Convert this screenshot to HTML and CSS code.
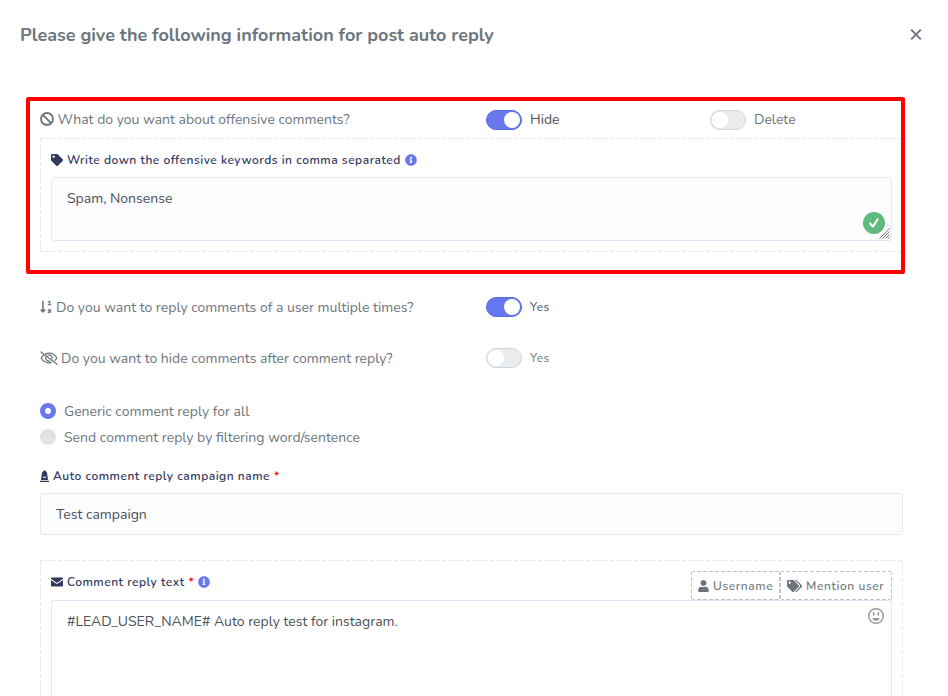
FILE: index.html
```
<!DOCTYPE html>
<html lang="en">
<head>
<meta charset="utf-8">
<title>Post auto reply</title>
<link rel="stylesheet" href="styles.css">
</head>
<body>
<svg class="defs" width="0" height="0" aria-hidden="true">
  <symbol id="info" viewBox="0 0 512 512"><path d="M256 8C119.043 8 8 119.083 8 256c0 136.997 111.043 248 248 248s248-111.003 248-248C504 119.083 392.957 8 256 8zm0 110c23.196 0 42 18.804 42 42s-18.804 42-42 42-42-18.804-42-42 18.804-42 42-42zm56 254c0 6.627-5.373 12-12 12h-88c-6.627 0-12-5.373-12-12v-24c0-6.627 5.373-12 12-12h12v-64h-12c-6.627 0-12-5.373-12-12v-24c0-6.627 5.373-12 12-12h64c6.627 0 12 5.373 12 12v100h12c6.627 0 12 5.373 12 12v24z"/></symbol>
</svg>
<header class="head">
  <h5 class="title">Please give the following information for post auto reply</h5>
  <svg class="close" width="12" height="12" viewBox="0 0 12 12"><path d="M1.2 .7l9.6 9.6M10.8 .7L1.2 10.3"/></svg>
</header>
<main class="body">
  <section class="offensive">
    <div class="row first">
      <div class="question">
        <svg class="ic" width="14" height="14" viewBox="0 0 14 14"><g fill="none" stroke="currentColor" stroke-width="1.8"><circle cx="7" cy="7" r="6"/><path d="M2.8 2.8l8.4 8.4"/></g></svg>
        <span>What do you want about offensive comments?</span>
      </div>
      <div class="choice"><span class="switch on"></span><span class="dark">Hide</span></div>
      <div class="choice"><span class="switch"></span><span>Delete</span></div>
    </div>
    <div class="panel dashed">
      <div class="label">
        <svg class="ic" width="12" height="12" viewBox="0 0 512 512"><path d="M0 252.118V48C0 21.49 21.49 0 48 0h204.118a48 48 0 0 1 33.941 14.059l211.882 211.882c18.745 18.745 18.745 49.137 0 67.882L293.823 497.941c-18.745 18.745-49.137 18.745-67.882 0L14.059 286.059A48 48 0 0 1 0 252.118zM112 64c-26.51 0-48 21.49-48 48s21.49 48 48 48 48-21.49 48-48-21.49-48-48-48z"/></svg>
        <span>Write down the offensive keywords in comma separated</span>
        <svg class="ic info" width="12" height="12"><use href="#info"/></svg>
      </div>
      <div class="field keywords">Spam, Nonsense
        <svg class="ok" width="22" height="22" viewBox="0 0 22 22"><circle cx="11" cy="11" r="11"/><path d="M7 11.3l2.9 3.3 4.7-7.2"/></svg>
        <svg class="grip" width="11" height="11" viewBox="0 0 11 11"><path d="M.5 10.5l10-10M3.5 10.5l7-7M6.5 10.5l4-4M9 10.5l1.5-1.5"/></svg>
      </div>
    </div>
    <div class="highlight"></div>
  </section>

  <div class="row multiple">
    <div class="question">
      <svg class="ic sort" width="13" height="14" viewBox="0 0 13 14"><path d="M2.9 .8v11M.7 9.6l2.2 2.2 2.2-2.2" fill="none" stroke="currentColor" stroke-width="1.6"/><text x="7.8" y="5.3">1</text><text x="7.8" y="12.5">9</text></svg>
      <span>Do you want to reply comments of a user multiple times?</span>
    </div>
    <div class="choice"><span class="switch on"></span><span class="small dark">Yes</span></div>
  </div>
  <div class="row hide">
    <div class="question">
      <svg class="ic eye" width="18" height="14" viewBox="0 0 18 14"><g fill="none" stroke="currentColor" stroke-width="1.3" stroke-linecap="round"><path d="M1 .9l16 12.3M5.6 2.9A8.6 8.6 0 0 1 9 2.2c3.4 0 6.3 1.9 7.8 4.8a9 9 0 0 1-1.8 2.4M3.3 4.4A9 9 0 0 0 1.2 7c1.5 2.9 4.4 4.8 7.8 4.8a8.6 8.6 0 0 0 2.3-.3M8 4a3.2 3.2 0 0 1 4.1 3.7M5.8 6.5a3.2 3.2 0 0 0 3.7 3.6"/></g></svg>
      <span>Do you want to hide comments after comment reply?</span>
    </div>
    <div class="choice"><span class="switch"></span><span class="small">Yes</span></div>
  </div>

  <div class="radios">
    <div class="radio"><span class="dot checked"></span><span>Generic comment reply for all</span></div>
    <div class="radio"><span class="dot"></span><span>Send comment reply by filtering word/sentence</span></div>
  </div>

  <div class="label name-label">
    <svg class="ic" width="9" height="12" viewBox="0 0 9 12"><path fill-rule="evenodd" d="M0 10.7h9V12H0zM1 10L2 2.5 4.5 0 7 2.5 8 10zM3 6.7v1h3v-1z"/></svg>
    <span>Auto comment reply campaign name</span><span class="star">*</span>
  </div>
  <div class="field name">Test campaign</div>

  <section class="panel reply dashed">
    <div class="reply-top">
      <div class="label">
        <svg class="ic" width="12" height="12" viewBox="0 0 12 12"><path d="M0 2.2q0-.7.7-.7h10.6q.7 0 .7.7v.6L6.7 6.6q-.7.5-1.4 0L0 2.8zM0 3.9l5 3.5q1 .7 2 0l5-3.5v5.9q0 .7-.7.7H.7q-.7 0-.7-.7z"/></svg>
        <span>Comment reply text</span><span class="star">*</span>
        <svg class="ic info" width="12" height="12"><use href="#info"/></svg>
      </div>
      <div class="buttons">
        <div class="btn user dashed"><svg width="11" height="12" viewBox="0 0 448 512"><path d="M224 256c70.7 0 128-57.3 128-128S294.7 0 224 0 96 57.3 96 128s57.3 128 128 128zm89.6 32h-16.7c-22.2 10.2-46.9 16-72.9 16s-50.6-5.8-72.9-16h-16.7C60.2 288 0 348.2 0 422.4V464c0 26.5 21.5 48 48 48h352c26.5 0 48-21.5 48-48v-41.6c0-74.2-60.2-134.4-134.4-134.4z"/></svg><span>Username</span></div>
        <div class="btn mention dashed"><svg width="15" height="12" viewBox="0 0 640 512"><path d="M497.941 225.941L286.059 14.059A48 48 0 0 0 252.118 0H48C21.49 0 0 21.49 0 48v204.118a48 48 0 0 0 14.059 33.941l211.882 211.882c18.744 18.745 49.136 18.746 67.882 0l204.118-204.118c18.745-18.745 18.745-49.137 0-67.882zM112 160c-26.51 0-48-21.49-48-48s21.49-48 48-48 48 21.49 48 48-21.49 48-48 48zm513.941 133.823L421.823 497.941c-18.745 18.745-49.137 18.745-67.882 0l-.36-.36L527.64 323.522c16.999-16.999 26.362-39.601 26.362-63.64s-9.362-46.641-26.362-63.64L331.397 0h48.721a48 48 0 0 1 33.941 14.059l211.882 211.882c18.745 18.745 18.745 49.137 0 67.882z"/></svg><span>Mention user</span></div>
      </div>
    </div>
    <div class="field message">#LEAD_USER_NAME# Auto reply test for instagram.
      <svg class="smile" width="16" height="16" viewBox="0 0 16 16"><circle cx="8" cy="8" r="7.3"/><path class="fill" d="M4.2 9.9h7.6Q10.8 12.8 8 12.8T4.2 9.9z"/><ellipse class="fill" cx="5.7" cy="5.9" rx=".9" ry="1.9"/><ellipse class="fill" cx="10.3" cy="5.9" rx=".9" ry="1.9"/></svg>
    </div>
  </section>
</main>
</body>
</html>
```
FILE: styles.css
```
* { box-sizing: border-box; }
body {
  margin: 0;
  background: #fff;
  color: #6c757d;
  font: 400 14px/20px Nunito, Lato, "Open Sans", sans-serif;
}
svg { display: block; flex: none; fill: currentColor; }
.defs { position: absolute; }

.head {
  display: flex;
  align-items: center;
  justify-content: space-between;
  height: 70px;
  padding: 0 26.5px 0 20px;
}
.title { margin: 0; font-size: 18px; line-height: 28px; font-weight: 700; }
.close { fill: none; stroke: #6c757d; stroke-width: 1.9; }

.body { padding: 39px 45px 0 40px; }
.offensive { position: relative; height: 165px; }
.highlight {
  position: absolute;
  inset: -12px -2px auto -14px;
  height: 177px;
  border: 4px solid #f00;
  border-radius: 2px;
}
.row { display: grid; grid-template-columns: 446px 224px 1fr; height: 20px; line-height: 22px; }
.question { display: flex; align-items: center; height: 20px; gap: 3.5px; white-space: nowrap; }
.question span { margin-top: 1px; }
.choice { display: flex; height: 20px; gap: 8px; }
.switch {
  width: 36px;
  height: 20px;
  padding: 1px;
  border: 1px solid #ced4da;
  border-radius: 10px;
  background: #e9ecef;
}
.first .switch { margin-top: 1px; }
.switch::before { content: ""; display: block; width: 16px; height: 16px; border-radius: 50%; background: #fff; }
.switch.on { background: #6777ef; border-color: #5b6be0; }
.switch.on::before { margin-left: 16px; }
.dark { color: #495057; }
.small { font-size: 12px; letter-spacing: .5px; line-height: 20px; }

.dashed {
  --dash: #e4e6fc;
  background:
    repeating-linear-gradient(90deg, var(--dash) 0 4px, transparent 4px 6px) top / 100% 1px no-repeat,
    repeating-linear-gradient(90deg, var(--dash) 0 4px, transparent 4px 6px) bottom / 100% 1px no-repeat,
    repeating-linear-gradient(var(--dash) 0 4px, transparent 4px 6px) left / 1px 100% no-repeat,
    repeating-linear-gradient(var(--dash) 0 4px, transparent 4px 6px) right / 1px 100% no-repeat;
}
.panel { width: 863px; padding: 11px; }
.offensive .panel { height: 114px; margin-top: 9px; }
.label {
  display: flex;
  align-items: center;
  gap: 4px;
  color: #34395e;
  font-size: 12px;
  font-weight: 600;
  letter-spacing: .5px;
  line-height: 22px;
}
.info { color: #6777ef; }
.star { color: #f00; }
.field {
  position: relative;
  border: 1px solid #e4e6fc;
  border-radius: 3px;
  background: #fdfdff;
  color: #495057;
  padding: 11px 15px 8px;
}
.keywords { height: 64px; margin-top: 6px; }
.ok { position: absolute; right: 6px; bottom: 6px; fill: #5fba7d; }
.ok path { fill: none; stroke: #fff; stroke-width: 2; stroke-linecap: round; stroke-linejoin: round; }
.grip { position: absolute; right: 1px; bottom: 1px; fill: none; stroke: #777; stroke-width: 1; }

.multiple { margin-top: 23px; }
.multiple .question, .hide .question { gap: 3px; }
.sort text { font: 700 6px "Liberation Sans", sans-serif; stroke: currentColor; stroke-width: .4px; }
.hide { margin-top: 31px; }
.radios { display: grid; gap: 6px; margin-top: 34px; }
.radio { display: flex; align-items: flex-start; gap: 8px; }
.dot { width: 16px; height: 16px; margin-top: 1px; border-radius: 50%; background: #dee2e6; }
.checked { border: 5px solid #6777ef; background: #fff; }

.name-label { margin-top: 17px; }
.name { width: 863px; height: 42px; margin-top: 6px; }
.reply { height: 136px; margin-top: 25px; padding-bottom: 0; background-size: 100% 1px, 0 0, 1px 100%, 1px 100%; }
.reply-top { display: flex; justify-content: space-between; align-items: flex-start; height: 29px; }
.buttons { display: flex; }
.btn {
  --dash: #bfc3c7;
  display: flex;
  align-items: center;
  gap: 4px;
  height: 29px;
  padding: 0 7px;
  border-radius: 3px;
  font-size: 12px;
  font-weight: 500;
  letter-spacing: .62px;
  white-space: nowrap;
}
.user { width: 89px; }
.mention { width: 112px; }
.message { height: 96px; background: #fff; border-bottom: 0; border-radius: 3px 3px 0 0; }
.smile { position: absolute; right: 7px; top: 7px; fill: none; stroke: #999; stroke-width: 1.4; }
.smile .fill { fill: #999; stroke: none; }
```
